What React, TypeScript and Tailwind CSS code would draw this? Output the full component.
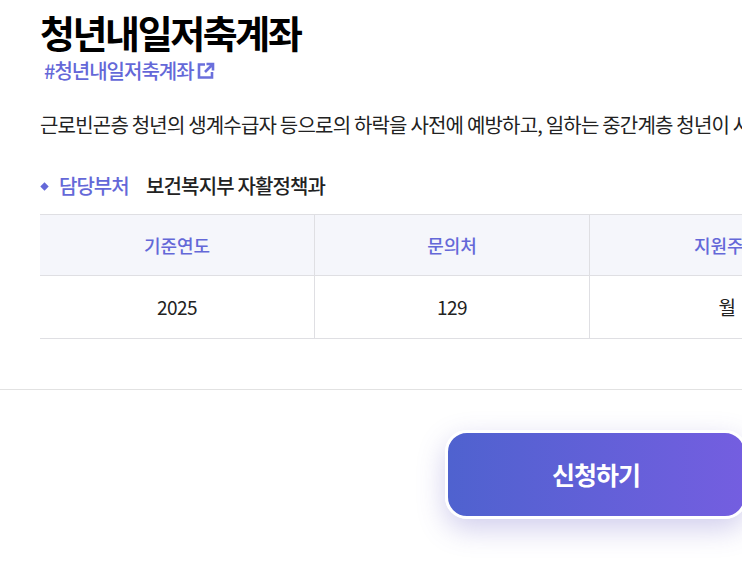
import React from "react";

const font = { fontFamily: '"Noto Sans CJK KR", "Noto Sans", sans-serif' };

export default function App() {
  return (
    <div className="w-[742px] h-[573px] overflow-hidden bg-white text-[#222] font-['Noto_Sans_CJK_KR',sans-serif]" style={font}>
      <div className="w-[1000px]">
        <div className="pl-10 pt-[6px] h-[389px]">
          <h1 className="m-0 text-[38px] leading-[52px] font-bold text-black tracking-[-2.4px] whitespace-nowrap">청년내일저축계좌</h1>
          <div className="flex items-center h-[26px] pl-1 text-[20px] font-medium text-[#6468d8] tracking-[-1px] whitespace-nowrap">
            <span>#청년내일저축계좌</span>
            <svg className="ml-[3px]" width="18" height="18" viewBox="0 0 18 18" fill="none" stroke="#6a6fdc" strokeWidth="2.6">
              <path d="M8 2.5H2v13h13V10" />
              <path d="M8 10L15 3M9.5 2H16v6.5" />
            </svg>
          </div>
          <p className="m-0 mt-[26px] text-[20px] leading-[30px] tracking-[-0.8px] whitespace-nowrap text-[#222]">
            근로빈곤층 청년의 생계수급자 등으로의 하락을 사전에 예방하고, 일하는 중간계층 청년이 사회에 안착할 수 있도록 지원
          </p>
          <div className="flex items-center mt-[31px] h-[30px] whitespace-nowrap">
            <span className="w-[7px] h-[7px] ml-[1px] rotate-45 bg-[#6468d8] scale-[0.85]" />
            <span className="ml-[11px] w-[87px] text-[20px] font-medium text-[#6468d8] tracking-[-1px]">담당부처</span>
            <span className="text-[20px] font-medium text-[#222] tracking-[-0.85px]">보건복지부 자활정책과</span>
          </div>
          <div className="mt-[13px] w-[960px] border-t border-[#dfdfe3]">
            <div className="grid grid-cols-[275px_275px_275px_135px] h-[61px] bg-[#f5f6fb] border-b border-[#dfdfe3] text-[18px] font-medium text-[#6468d8]">
              <div className="flex items-center justify-center border-r border-[#dfdfe3]">기준연도</div>
              <div className="flex items-center justify-center border-r border-[#dfdfe3]">문의처</div>
              <div className="flex items-center justify-center border-r border-[#dfdfe3]">지원주기</div>
              <div className="flex items-center justify-center">지원금액</div>
            </div>
            <div className="grid grid-cols-[275px_275px_275px_135px] h-[63px] border-b border-[#dfdfe3] text-[19px] tracking-[-0.6px] text-[#222]">
              <div className="flex items-center justify-center border-r border-[#dfdfe3]">2025</div>
              <div className="flex items-center justify-center border-r border-[#dfdfe3]">129</div>
              <div className="flex items-center justify-center border-r border-[#dfdfe3]">월</div>
              <div className="flex items-center justify-center">지원</div>
            </div>
          </div>
        </div>
        <div className="border-t border-[#e2e2e2] w-[742px]" />
        <div className="pl-[445px] pt-[40px]">
          <div className="flex items-center justify-center w-[302px] h-[89px] rounded-[22px] border-[3px] border-white bg-[linear-gradient(90deg,#4f62cf,#745ee0)] text-white text-[25px] font-bold tracking-[-1px] shadow-[0_10px_28px_rgba(90,80,190,0.28)]">
            신청하기
          </div>
        </div>
      </div>
    </div>
  );
}
